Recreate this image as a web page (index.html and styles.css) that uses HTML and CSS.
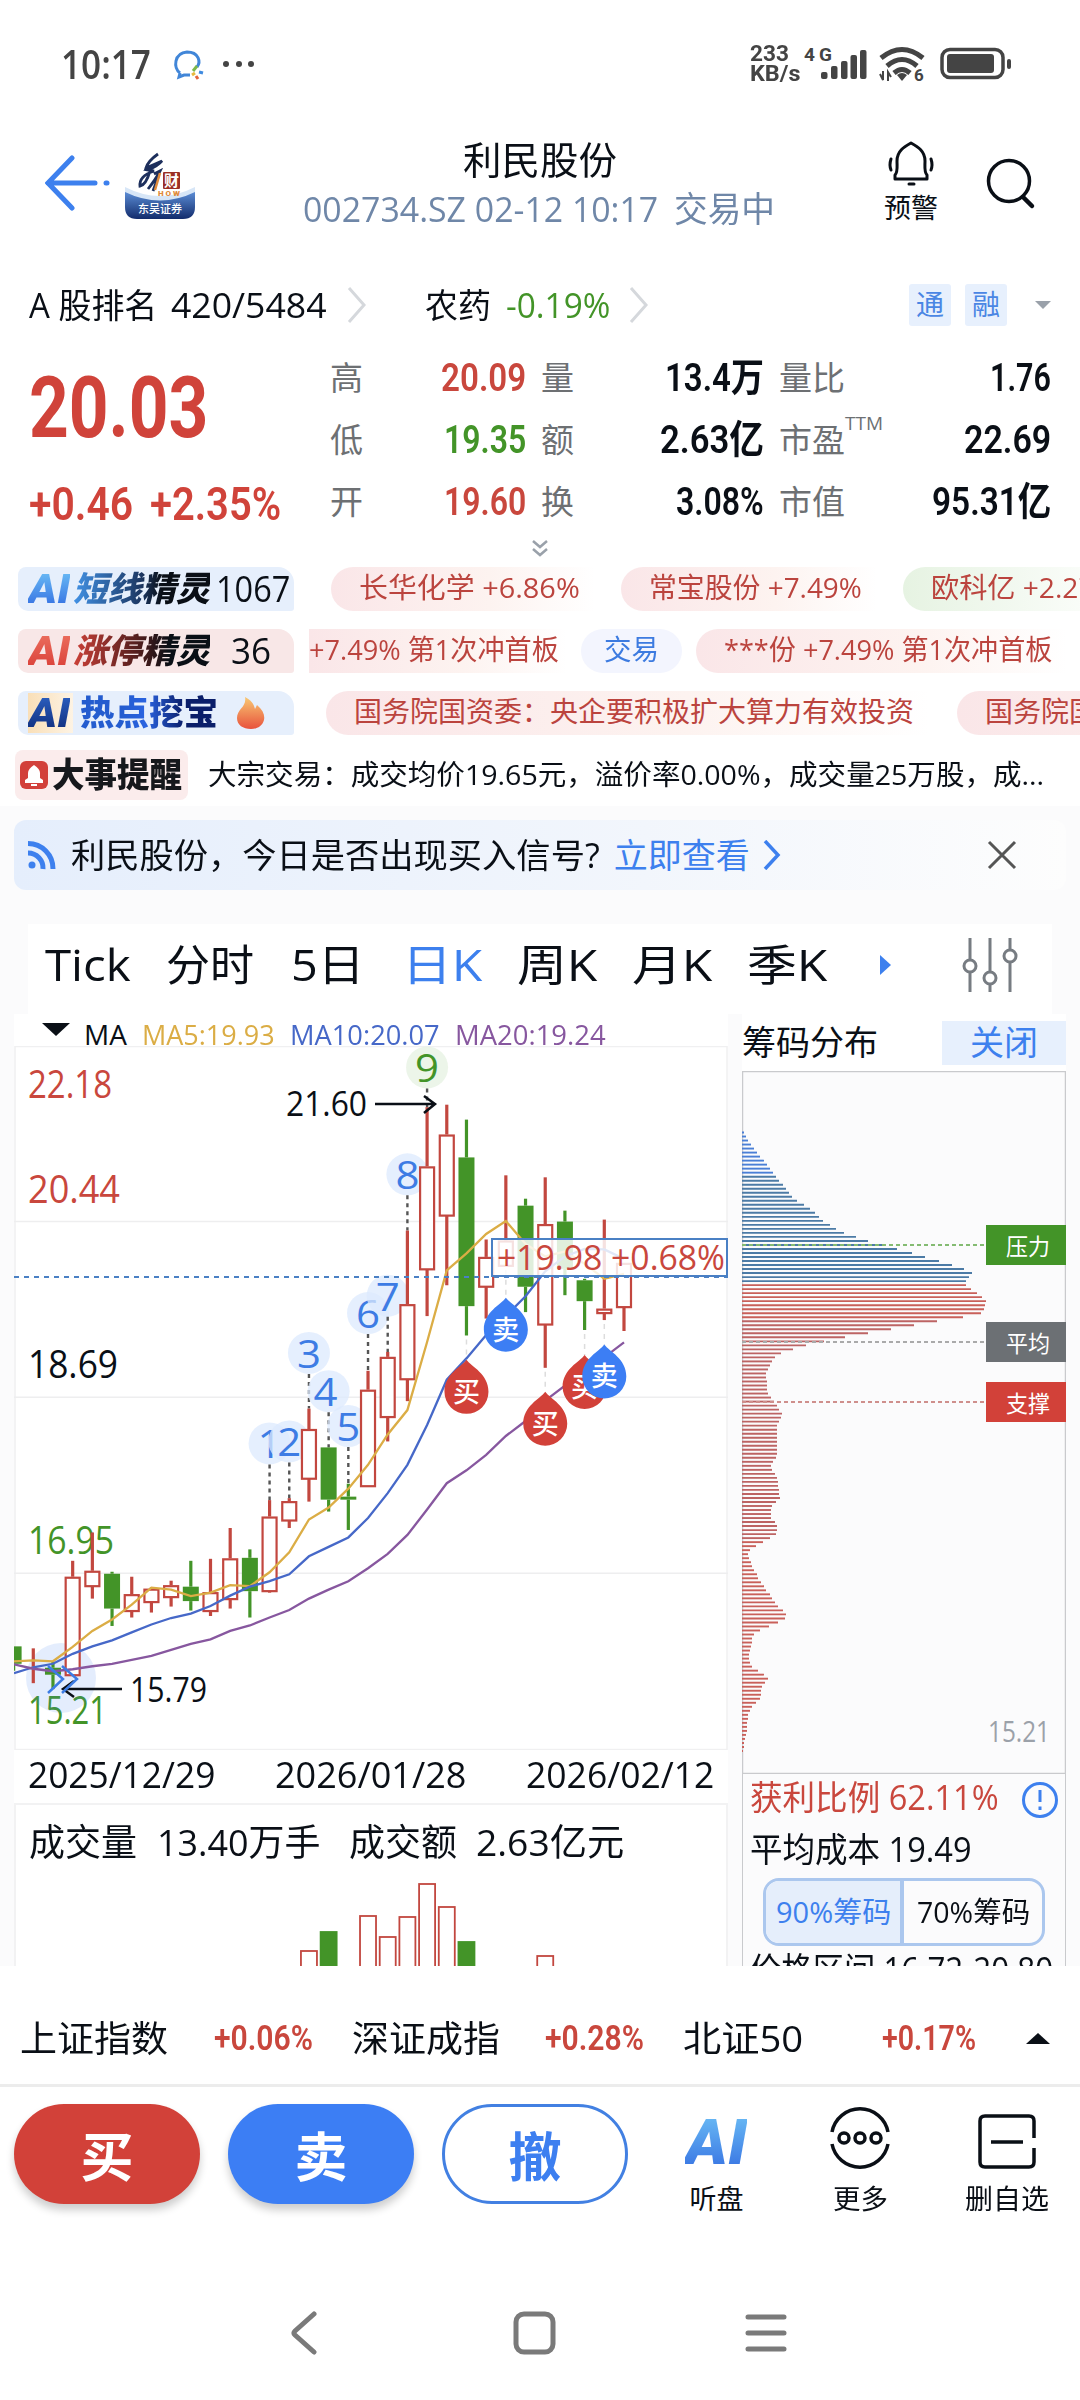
FILE: index.html
```html
<!DOCTYPE html>
<html lang="zh-CN">
<head>
    <meta charset="UTF-8">
    <meta name="viewport" content="width=device-width, initial-scale=1.0">
    <title>利民股份</title>
    <link rel="stylesheet" href="styles.css">
</head>
<body>
    <div class="status">
        <span class="time"><span class="fit" data-w="90">10:17</span></span>
        <svg class="chat" width="36" height="36" viewBox="0 0 36 36" fill="none">
            <path d="M10 27 C3 22 4 7 17 6 C29 6 31 16 27 21 M10 27 L9 31 L14 29 L20 29" stroke="#4186d8" stroke-width="3"/>
            <path d="M23 25 l4 -5" stroke="#7db84a" stroke-width="3"/><path d="M26 30 l2 3" stroke="#e4643c" stroke-width="3"/><path d="M29 26 l4 1" stroke="#3f8be0" stroke-width="3"/><path d="M22 29 l3 -2" stroke="#e8b93f" stroke-width="3"/>
        </svg>
        <svg class="dots" width="34" height="8" viewBox="0 0 34 8" fill="#444"><circle cx="4" cy="4" r="3"/><circle cx="17" cy="4" r="3"/><circle cx="29" cy="4" r="3"/></svg>
        <span class="speed"><span class="fit" data-w="39">233</span><br><span class="fit" data-w="51">KB/s</span></span>
        <svg width="216" height="40" viewBox="804 44 216 40" fill="#444">
            <text class="net" x="804" y="61" textLength="28">4G</text>
            <rect x="821" y="72" width="6.5" height="7" rx="2"/><rect x="831" y="66" width="6.5" height="13" rx="2"/><rect x="841" y="61" width="6.5" height="18" rx="2"/><rect x="850.500" y="55" width="6.500" height="24" rx="2"/><rect x="860" y="50" width="6.5" height="29" rx="2"/>
            <g fill="none" stroke="#444" stroke-width="5"><path d="M881 58 Q902 41 923 58"/><path d="M887 66 Q902 53 917 66"/><path d="M894 73 Q902 66 910 73"/></g>
            <path d="M897 75 Q902 71 907 75 L902 81 Z"/>
            <path d="M880 74 l3 6 v-9 M888 81 v-9 l3 5" fill="none" stroke="#444" stroke-width="2"/>
            <text class="net6" x="914" y="81">6</text>
            <rect x="942" y="49.500" width="61" height="28" rx="8" fill="none" stroke="#444" stroke-width="3.500"/><rect x="947" y="54" width="47" height="19" rx="3"/><rect x="1007" y="59" width="4" height="10" rx="2"/>
        </svg>
    </div>

    <div class="header">
        <svg class="back" width="68" height="60" viewBox="0 0 68 60" fill="none" stroke="#3d80ee" stroke-width="5" stroke-linecap="round"><path d="M27 5 L3 30 L27 55 M3 30 H50"/><path d="M61 30 h1"/></svg>
        <svg class="logo" width="72" height="72" viewBox="0 0 72 72">
            <defs><linearGradient id="lg" x1="0" y1="0" x2="0" y2="1"><stop offset="0" stop-color="#5d8fd8"/><stop offset="1" stop-color="#122c6c"/></linearGradient></defs>
            <path d="M1 42 Q36 58 71 42 V58 Q71 70 59 70 H13 Q1 70 1 58 Z" fill="url(#lg)"/>
            <path d="M1 38 Q36 56 71 38 V43 Q36 60 1 43 Z" fill="#d7e6f7"/>
            <path d="M34 5 Q24 12 22 19 L38 12 Q34 17 24 21 L30 22 Q15 27 16 37 Q22 36 26 22 M30 25 L36 22 Q32 30 24 40 M34 28 Q32 34 29 42" fill="none" stroke="#1d2f5c" stroke-width="2.800"/>
            <path d="M36 24 L31 41" stroke="#e08b3c" stroke-width="2.500"/>
            <rect x="39" y="23" width="17" height="17" rx="1" fill="#9b2f24"/>
            <text x="40" y="37" class="logo-red">财</text><text x="34" y="47" class="logo-how" textLength="22">HOW</text><text x="14" y="64" class="logo-name" textLength="44">东吴证券</text>
        </svg>
        <div class="titles">
            <h1><span class="fit" data-w="154">利民股份</span></h1>
            <div class="sub"><span class="fit" data-w="355">002734.SZ 02-12 10:17</span><span class="fit" data-w="101">交易中</span></div>
        </div>
        <div class="alert">
            <svg width="48" height="48" viewBox="0 0 48 48" fill="none" stroke="#0a0f16" stroke-width="3" stroke-linecap="round"><path d="M8 40 V36 C11 33 10 28 10 22 C10 12 17 8 24 4 C31 8 38 12 38 22 C38 28 37 33 40 36 V40 Z" stroke-linejoin="round"/><path d="M22 45 h5 M4 20 Q2 26 4 31 M44 20 Q46 26 44 31"/></svg>
            <span class="fit" data-w="54">预警</span>
        </div>
        <svg class="search" width="54" height="54" viewBox="0 0 54 54" fill="none" stroke="#0a0f16" stroke-width="3.500"><circle cx="25" cy="25" r="20.500"/><path d="M39 41 l9 9" stroke-width="4.500" stroke-linecap="round"/></svg>
    </div>

    <div class="rank">
        <span><span class="fit" data-w="128">A 股排名</span></span>
        <span><span class="fit" data-w="156">420/5484</span></span>
        <svg width="20" height="36" viewBox="0 0 20 36"><path d="M2 1 L17 18 L2 35" class="more"/></svg>
        <span><span class="fit" data-w="66">农药</span></span>
        <span class="green"><span class="fit" data-w="104">-0.19%</span></span>
        <svg width="20" height="36" viewBox="0 0 20 36"><path d="M2 1 L17 18 L2 35" class="more"/></svg>
        <span class="tag">通</span>
        <span class="tag">融</span>
        <svg width="18" height="10" viewBox="0 0 18 10"><path d="M1 1 H17 L9 9 Z" fill="#9aa1aa"/></svg>
    </div>

    <div class="quote">
        <div class="now">
            <div class="price"><span class="fit" data-w="179">20.03</span></div>
            <div class="change"><span class="fit" data-w="104">+0.46</span><span class="fit" data-w="131">+2.35%</span></div>
        </div>
        <div class="facts">
            <label>高</label><b class="red"><span class="fit" data-w="85">20.09</span></b><label>量</label><b><span class="fit" data-w="99">13.4万</span></b><label>量比</label><b><span class="fit" data-w="61">1.76</span></b>
            <label>低</label><b class="green"><span class="fit" data-w="82">19.35</span></b><label>额</label><b><span class="fit" data-w="104">2.63亿</span></b><label>市盈<sup>TTM</sup></label><b><span class="fit" data-w="87">22.69</span></b>
            <label>开</label><b class="red"><span class="fit" data-w="82">19.60</span></b><label>换</label><b><span class="fit" data-w="88">3.08%</span></b><label>市值</label><b><span class="fit" data-w="119">95.31亿</span></b>
        </div>
    </div>
    <div class="expand"><svg width="16" height="18" viewBox="0 0 16 18" fill="none" stroke="#9aa1aa" stroke-width="2.500"><path d="M1 2 L8 8 L15 2 M1 10 L8 16 L15 10"/></svg></div>

    <div class="feeds">
        <div class="feed">
            <div class="badge blue"><i class="ai"><span class="fit" data-w="42">AI</span></i><i class="name"><span class="fit" data-w="137">短线精灵</span></i><span class="count fit" data-w="74">1067</span></div>
            <div class="ticker t1"><span class="pill"><span class="fit" data-w="221">长华化学 +6.86%</span></span><span class="pill"><span class="fit" data-w="213">常宝股份 +7.49%</span></span><span class="pill lime"><span class="fit" data-w="187">欧科亿 +2.27%</span></span></div>
        </div>
        <div class="feed">
            <div class="badge pink"><i class="ai"><span class="fit" data-w="42">AI</span></i><i class="name"><span class="fit" data-w="137">涨停精灵</span></i><span class="count short fit" data-w="40">36</span></div>
            <div class="ticker t2"><span class="pill cut"><span class="fit" data-w="250">+7.49% 第1次冲首板</span></span><span class="pill deal"><span class="fit" data-w="55">交易</span></span><span class="pill"><span class="fit" data-w="328">***份 +7.49% 第1次冲首板</span></span><span class="pill deal"></span></div>
        </div>
        <div class="feed">
            <div class="badge hot"><i class="ai"><span class="fit" data-w="42">AI</span></i><i class="name"><span class="fit" data-w="138">热点挖宝</span></i>
                <svg width="32" height="34" viewBox="0 0 32 34"><defs><linearGradient id="fire" x1="0" y1="0" x2="0" y2="1"><stop offset="0" stop-color="#f8c873"/><stop offset="1" stop-color="#e8523c"/></linearGradient></defs><path d="M10 1 C16 4 19 8 20 13 L22 9 C28 14 30 19 29 24 C27 31 21 33 16 33 C8 33 2 29 2 22 C2 13 12 11 10 1 Z" fill="url(#fire)"/></svg>
            </div>
            <div class="ticker t3"><span class="pill wide"><span class="fit" data-w="560">国务院国资委：央企要积极扩大算力有效投资</span></span><span class="pill"><span class="fit" data-w="560">国务院国资委：央企要积极扩大算力有效投资</span></span></div>
        </div>
        <div class="feed event">
            <div class="badge remind">
                <svg width="30" height="30" viewBox="0 0 30 30"><rect x="1" y="1" width="28" height="28" rx="6" fill="#d2403a"/><path d="M6 23 V20 L9 18 V13 Q9 9 15 5 Q21 9 21 13 V18 L24 20 V23 Z M12 24 h6 v2 h-6 z" fill="#fff"/></svg>
                <i class="name"><span class="fit" data-w="130">大事提醒</span></i>
            </div>
            <span class="fit" data-w="836">大宗交易：成交均价19.65元，溢价率0.00%，成交量25万股，成...</span>
        </div>
    </div>

    <div class="main">
        <div class="banner">
            <svg width="30" height="30" viewBox="0 0 30 30" fill="none" stroke="#3d80ee" stroke-width="5"><circle cx="5" cy="25" r="3.500" fill="#3d80ee" stroke="none"/><path d="M1 13 A15 15 0 0 1 16 29 M1 3.500 A25 25 0 0 1 26 29"/></svg>
            <span class="fit" data-w="529">利民股份，今日是否出现买入信号?</span>
            <a><span class="fit" data-w="136">立即查看</span><svg width="18" height="30" viewBox="0 0 18 30"><path d="M2 1 L15 15 L2 29" fill="none" stroke="#3d80ee" stroke-width="3.500"/></svg></a>
            <svg class="close" width="30" height="30" viewBox="0 0 30 30"><path d="M2 2 L28 28 M28 2 L2 28" stroke="#555" stroke-width="3"/></svg>
        </div>

        <div class="tabs">
            <span><span class="fit" data-w="86">Tick</span></span>
            <span><span class="fit" data-w="88">分时</span></span>
            <span><span class="fit" data-w="74">5日</span></span>
            <span class="on"><span class="fit" data-w="80">日K</span></span>
            <span><span class="fit" data-w="80">周K</span></span>
            <span><span class="fit" data-w="80">月K</span></span>
            <span><span class="fit" data-w="80">季K</span></span>
            <svg width="12" height="22" viewBox="0 0 12 22"><path d="M1 1 L12 11 L1 21 Z" fill="#3d80ee"/></svg>
            <svg width="56" height="58" viewBox="0 0 56 58" fill="none" stroke="#777c82" stroke-width="3"><path d="M8 2 V24 M8 36 V56 M28 2 V36 M28 48 V56 M48 2 V14 M48 26 V56"/><circle cx="8" cy="30" r="6"/><circle cx="28" cy="42" r="6"/><circle cx="48" cy="20" r="6"/></svg>
        </div>

        <div class="panels">
            <div class="kline">
                <div class="legend">
                    <svg width="28" height="14" viewBox="0 0 28 14"><path d="M0 0 H28 L14 13 Z" fill="#0a0f16"/></svg>
                    <span><span class="fit" data-w="43">MA</span></span>
                    <span class="ma5"><span class="fit" data-w="133">MA5:19.93</span></span>
                    <span class="ma10"><span class="fit" data-w="150">MA10:20.07</span></span>
                    <span class="ma20"><span class="fit" data-w="151">MA20:19.24</span></span>
                </div>
                <svg id="candles" width="714" height="704" viewBox="0 0 714 704"></svg>
                <div class="dates"><span class="fit" data-w="187">2025/12/29</span><span class="fit" data-w="191">2026/01/28</span><span class="fit" data-w="188">2026/02/12</span></div>
                <div class="volume">
                    <div class="vtext"><span><span class="fit" data-w="108">成交量</span></span><span><span class="fit" data-w="163">13.40万手</span></span><span><span class="fit" data-w="108">成交额</span></span><span><span class="fit" data-w="148">2.63亿元</span></span></div>
                    <svg id="bars" width="712" height="86" viewBox="0 0 712 86"></svg>
                </div>
            </div>

            <div class="chips">
                <div class="chead"><span class="fit" data-w="136">筹码分布</span><a><span class="fit" data-w="68">关闭</span></a></div>
                <svg id="chips" width="324" height="703" viewBox="0 0 324 703"></svg>
                <div class="cinfo">
                    <div class="line red"><span class="fit" data-w="249">获利比例 62.11%</span>
                        <svg width="38" height="38" viewBox="0 0 38 38" fill="none" stroke="#3d80ee" stroke-width="3"><circle cx="19" cy="19" r="16.500"/><path d="M19 9 V21 M19 25.500 V29"/></svg>
                    </div>
                    <div class="line"><span class="fit" data-w="222">平均成本 19.49</span></div>
                    <div class="switch"><span class="on"><span class="fit" data-w="115">90%筹码</span></span><span><span class="fit" data-w="113">70%筹码</span></span></div>
                    <div class="line last"><span class="fit" data-w="303">价格区间 16.72-20.80</span></div>
                </div>
            </div>
        </div>
    </div>

    <div class="indexes">
        <span><span class="fit" data-w="148">上证指数</span></span><b><span class="fit" data-w="99">+0.06%</span></b>
        <span><span class="fit" data-w="148">深证成指</span></span><b><span class="fit" data-w="99">+0.28%</span></b>
        <span><span class="fit" data-w="120">北证50</span></span><b><span class="fit" data-w="94">+0.17%</span></b>
        <svg width="24" height="12" viewBox="0 0 24 12"><path d="M0 11 L12 0 L24 11 Z" fill="#0a0f16"/></svg>
    </div>

    <div class="actions">
        <button class="buy">买</button>
        <button class="sell">卖</button>
        <button class="cancel">撤</button>
        <div class="tool"><i class="ai big"><span class="fit" data-w="62">AI</span></i><span class="fit" data-w="54">听盘</span></div>
        <div class="tool">
            <svg width="62" height="62" viewBox="0 0 62 62" fill="none" stroke="#0a0f16" stroke-width="3.500"><path d="M3 25 A28.500 28.500 0 0 1 59 25 M3 37 A28.500 28.500 0 0 0 59 37"/><circle cx="15" cy="31" r="5"/><circle cx="31" cy="31" r="5"/><circle cx="47" cy="31" r="5"/></svg>
            <span class="fit" data-w="55">更多</span>
        </div>
        <div class="tool">
            <svg width="58" height="62" viewBox="0 0 58 62" fill="none" stroke="#0a0f16" stroke-width="3.500"><path d="M56 31 V14 Q56 9 51 9 H7 Q2 9 2 14 V55 Q2 60 7 60 H51 Q56 60 56 55 V41 M13 35 H45"/></svg>
            <span class="fit" data-w="84">删自选</span>
        </div>
    </div>

    <div class="nav">
        <svg width="28" height="44" viewBox="0 0 28 44"><path d="M25 3 L6 20 Q4 22 6 24 L25 41"/></svg>
        <svg width="44" height="44" viewBox="0 0 44 44"><rect x="4" y="3" width="37" height="38" rx="8"/></svg>
        <svg width="42" height="44" viewBox="0 0 42 44"><path d="M3 6 H39 M3 22 H39 M3 38 H39"/></svg>
    </div>
    <script src="chart.js"></script>
</body>
</html>
```
FILE: styles.css
```css
*{
    margin: 0; padding: 0;
    box-sizing: border-box;
}
body{
    width: 1080px;
    height: 2400px;
    overflow: hidden;
    display: flex;
    flex-direction: column;
    background: #fff;
    color: #0a0f16;
    font-family: "Open Sans", "Noto Sans CJK SC", sans-serif;
    font-size: 32px;
    line-height: 1.2;
    white-space: nowrap;
}
body > div{
    flex-shrink: 0;
}
svg{
    display: block;
    flex-shrink: 0;
}
/* text set to a fixed width, see chart.js */
.fit{
    display: inline-block;
    transform-origin: 0 50%;
}
.red{ color: #c9473d; }
.green{ color: #439428; }

.status{
    height: 128px;
    display: flex;
    align-items: center;
    padding-left: 61px;
    color: #444;
}
.time{
    width: 109px;
    font-size: 39px;
    font-weight: 600;
}
.dots{ margin-left: 16px; }
.speed{
    margin-left: auto;
    width: 54px;
    font: 700 22px/20px Roboto, sans-serif;
}
.status .dots + .speed + svg{ margin-right: 60px; }
.net{ font: 700 19px Roboto, sans-serif; }
.net6{ font: 700 17px Roboto, sans-serif; }

.header{
    height: 134px;
    display: grid;
    grid-template-columns: 79px 177px 563px 97px 60px;
    padding-left: 45px;
}
.back{ margin-top: 25px; }
.logo{ margin-top: 21px; }
.logo-red{ font: 700 15px "Noto Sans CJK SC", sans-serif; fill: #fff; }
.logo-how{ font: 900 8px Roboto, sans-serif; fill: #e08b3c; }
.logo-name{ font: 500 11px "Noto Sans CJK SC", sans-serif; fill: #fff; }
.titles{
    padding-top: 6px;
}
h1{
    padding-left: 162px;
    font-size: 38px;
    font-weight: 400;
    line-height: 50px;
}
.sub{
    display: flex;
    gap: 16px;
    padding-left: 2px;
    font-size: 35px;
    line-height: 49px;
    color: #6f87a8;
}
.alert{
    padding-top: 11px;
    display: flex;
    flex-direction: column;
    align-items: center;
    width: 60px;
    margin-left: 17px;
    font-size: 27px;
    line-height: 42px;
}
.search{ margin: 28px 0 0 23px; }

.rank{
    height: 84px;
    padding-top: 2px;
    display: grid;
    grid-template-columns: 142px 176px 78px 81px 123px 280px 56px 69px 20px;
    align-items: center;
    padding-left: 29px;
    font-size: 34px;
}
.more{
    fill: none;
    stroke: #d5d8dc;
    stroke-width: 3;
}
.tag{
    width: 42px;
    height: 42px;
    border-radius: 3px;
    background: #e7f0fd;
    color: #4a86e4;
    font-size: 28px;
    line-height: 41px;
    text-align: center;
}

.quote{
    height: 186px;
    padding-top: 1px;
    display: flex;
}
.now{
    width: 330px;
    padding: 16px 0 0 29px;
    color: #d0433a;
    font-family: Roboto, sans-serif;
    font-weight: 600;
}
.price{
    font-size: 86px;
    line-height: 90px;
    height: 114px;
    font-weight: 700;
}
.change{
    display: flex;
    gap: 17px;
    font-size: 46px;
    line-height: 54px;
    font-weight: 600;
}
.facts{
    display: grid;
    grid-template-columns: 80px 116px 35px 203px 130px 157px;
    grid-template-rows: 62px 62px 62px;
    align-items: center;
}
.facts label{
    color: #6d7073;
    font-size: 33px;
}
.facts b{
    text-align: right;
    font: 600 39px/46px Roboto, "Noto Sans CJK SC", sans-serif;
}
.facts > :nth-child(6n+3),
.facts > :nth-child(6n+5){ padding-left: 15px; }
.facts sup{
    font-size: 19px;
    line-height: 0;
    vertical-align: 22px;
}
.expand{
    height: 32px;
    display: flex;
    align-items: center;
    justify-content: center;
}

.feeds{
    height: 242px;
    padding-top: 3px;
    display: flex;
    flex-direction: column;
    gap: 18px;
}
.feed{
    height: 44px;
    display: flex;
    align-items: center;
    font-size: 28px;
}
.badge{
    width: 276px;
    height: 44px;
    margin-left: 18px;
    padding-left: 10px;
    display: flex;
    align-items: center;
    border-radius: 8px 16px 3px 10px;
}
.blue, .hot{ background: #e6effc; }
.pink{ background: #f8e7e7; }
.badge i{
    font-family: Roboto, "Noto Sans CJK SC", sans-serif;
    font-weight: 900;
    font-style: italic;
    line-height: 44px;
}
.badge .ai{
    width: 45px;
    font-size: 41px;
}
.badge .name{
    font-size: 34px;
}
.hot .name, .remind .name{ font-style: normal; }
.ai .fit, .name .fit{
    -webkit-background-clip: text;
    background-clip: text;
    color: transparent;
}
.ai .fit{ background-image: linear-gradient(#70c4f7, #3069e0); }
.blue .name .fit{ background-image: linear-gradient(90deg, #4292e6, #1c3762 50%, #0a0f16 65%); }
.pink .ai .fit{ background-image: linear-gradient(#ed7462, #d83b35); }
.pink .name .fit{ background-image: linear-gradient(90deg, #cc4138, #4b1c1c 50%, #0a0f16 70%); }
.hot .ai .fit{ background-image: linear-gradient(#2e62c4, #0e2c7a); }
.hot .name .fit{ background-image: linear-gradient(90deg, #245ccf 30%, #2a63e0 48%, #0a1e6a 75%); }
.hot .name{ margin-left: 7px; }
.hot .ai{ background: linear-gradient(90deg, #f9dfb8, #fdf3e4); height: 40px; line-height: 40px; }
.hot svg{ margin-left: 17px; }
.count{
    margin-left: 6px;
    font-size: 36px;
}
.count.short{ margin-left: 21px; }
.ticker{
    width: 771px;
    height: 44px;
    margin-left: 15px;
    display: flex;
    overflow: hidden;
    color: #bb443e;
}
.pill{
    flex-shrink: 0;
    height: 44px;
    padding: 0 15px 0 28px;
    border-radius: 22px 0 0 22px;
    background: linear-gradient(90deg, #fae6e8, #fdf3f0 60%, #fff);
    font-size: 28px;
    line-height: 41px;
}
.t1{ padding-left: 22px; gap: 26px; }
.t2{ gap: 14px; }
.t3{ padding-left: 17px; gap: 28px; }
.lime{ background: linear-gradient(90deg, #e6f3e2, #fff); }
.deal{
    padding: 0 23px;
    border-radius: 22px;
    background: #f3f5fe;
    color: #3d7be0;
}
.cut{
    padding: 0 8px 0 0;
    border-radius: 0;
}
.event{ height: 50px; margin-top: -3px; }
.remind{
    width: 173px;
    height: 50px;
    margin: 0 20px 0 15px;
    padding-left: 4px;
    background: #fbecec;
    border-radius: 8px;
}
.remind .name{ margin-left: 3px; }
.remind .name .fit{ background: none; color: #16181c; }

.main{
    height: 1160px;
    padding: 14px 14px 0;
    background: #fbfbfc;
    overflow: hidden;
}
.banner{
    height: 70px;
    padding-left: 13px;
    display: flex;
    align-items: center;
    border-radius: 12px;
    background: linear-gradient(90deg, #e5eefc, #f2f6fc 60%, #fdfdfd);
    font-size: 34px;
}
.banner > .fit{ margin-left: 14px; }
.banner a{
    display: flex;
    align-items: center;
    gap: 13px;
    margin-left: 14px;
    color: #3d80ee;
}
.close{ margin-left: auto; margin-right: 49px; }

.tabs{
    width: 1024px;
    height: 90px;
    margin: 34px 0 0 14px;
    padding: 0 0 9px 17px;
    display: grid;
    grid-template-columns: 121px 125px 111px 115px 115px 115px 132px 83px 56px;
    align-items: center;
    background: #fff;
    font-size: 43px;
}
.tabs .on{ color: #3d80ee; }

.panels{
    display: flex;
    gap: 14px;
}
.kline{
    width: 714px;
    height: 952px;
    background: #fff;
}
.legend{
    height: 32px;
    padding: 8px 0 0 28px;
    display: grid;
    grid-template-columns: 42px 58px 148px 165px 160px;
    align-items: center;
    font-size: 28px;
    line-height: 24px;
}
.legend svg{ margin-top: -9px; }
.ma5{ color: #dbad45; }
.ma10{ color: #4668c8; }
.ma20{ color: #87579f; }
.dates{
    height: 53px;
    padding: 0 14px 6px;
    display: flex;
    justify-content: space-between;
    align-items: center;
    font-size: 37px;
    line-height: 40px;
}
.volume{
    height: 163px;
    border: 2px solid #f2f2f3;
    border-bottom: 0;
}
.vtext{
    height: 75px;
    padding-left: 13px;
    display: grid;
    grid-template-columns: 128px 192px 127px 160px;
    align-items: center;
    font-size: 37px;
}
.chips{ width: 324px; }
.chead{
    height: 57px;
    background: #fff;
    display: flex;
    justify-content: space-between;
    align-items: center;
    font-size: 34px;
}
.chead a{
    width: 124px;
    height: 44px;
    padding-left: 28px;
    background: #e7f0fd;
    color: #3d80ee;
    line-height: 42px;
}
.cinfo{
    height: 192px;
    padding-left: 7px;
    border: 1px solid #c9cacd;
    border-width: 0 1px;
    overflow: hidden;
}
.line{
    height: 52px;
    display: flex;
    align-items: center;
    justify-content: space-between;
    padding-right: 6px;
    font-size: 34px;
    line-height: 48px;
}
.line > .fit{
    position: relative;
    top: -3px;
}
.switch{
    width: 282px;
    height: 68px;
    margin-left: 13px;
    display: flex;
    border: 3px solid #abc7ee;
    border-radius: 16px;
    font-size: 29px;
    line-height: 61px;
    overflow: hidden;
}
.switch > span{
    width: 50%;
    padding-left: 13px;
}
.switch > .on{
    padding-left: 10px;
    background: #e5eefb;
    border-right: 4px solid #abc7ee;
    color: #3d80ee;
}

.indexes{
    height: 121px;
    padding: 28px 0 0 20px;
    border-bottom: 3px solid #ececec;
    display: grid;
    grid-template-columns: 194px 138px 193px 138px 199px 144px 24px;
    align-items: center;
    font-size: 36px;
}
.indexes b{
    font: 600 35px/40px Roboto, sans-serif;
    color: #c9473d;
}
.actions{
    height: 173px;
    padding: 17px 0 0 14px;
    display: grid;
    grid-template-columns: 214px 214px 213px 123px 164px 130px;
}
button{
    width: 186px;
    height: 100px;
    border: 0;
    border-radius: 50px;
    color: #fff;
    font: 700 53px/96px "Noto Sans CJK SC", sans-serif;
    box-shadow: 0 6px 9px rgba(0, 0, 0, .2);
}
.buy{ background: #d24139; }
.sell{ background: #3c7ef4; }
.cancel{
    background: #fff;
    border: 3px solid #4280e2;
    color: #3d7ff0;
    line-height: 92px;
    box-shadow: none;
}
.tool{
    padding-top: 3px;
    display: flex;
    flex-direction: column;
    align-items: center;
    font-size: 27px;
    line-height: 60px;
}
.tool .big{
    height: 62px;
    font: italic 900 62px/72px Roboto, sans-serif;
}
.nav{
    height: 140px;
    display: flex;
    align-items: center;
    padding: 6px 0 0 289px;
    gap: 195px;
    fill: none;
    stroke: #7a7a7a;
    stroke-width: 5;
    stroke-linecap: round;
}
.nav svg:last-child{ margin-left: -6px; }

#candles text, #chips text{ fill: #0a0f16; font-size: 38px; }
#candles text.c-red{ fill: #c9473d; }
#candles text.c-green{ fill: #439428; }
#candles text.c-blue{ fill: #3d7ce4; }
#candles text.small{ font-size: 34px; }
#candles text.drop{
    fill: #fff;
    font: 500 27px "Noto Sans CJK SC", sans-serif;
}
#chips text.low{ fill: #9ba1a9; font-size: 30px; }
#chips text.flag{ fill: #fff; font: 400 23px "Noto Sans CJK SC", sans-serif; }
```
FILE: chart.js
```js
// squeeze or stretch every .fit text to its data-w
document.querySelectorAll(".fit").forEach(function(el){
    let natural = el.offsetWidth;
    let w = Number(el.dataset.w);
    el.style.transform = "scaleX(" + (w / natural) + ")";
    el.style.marginRight = (w - natural) + "px";
});

const RED = "#c2473f", GREEN = "#439428", BLUE = "#3d7ce4";
let x = i => 19.69 * i - 0.4;
let y = v => (v - 72) * 0.4974;

// high, body top, body bottom, low, 1 = up
let data = [
    [1279,1279,1314,1328,0],[1283,1320,1324,1353,1],[1310,1322,1336,1365,0],[1107,1139,1337,1337,1],
    [1050,1127,1158,1183,1],[1129,1133,1203,1238,0],[1139,1174,1208,1221,1],[1160,1163,1190,1211,1],
    [1147,1156,1180,1199,1],[1107,1159,1188,1207,0],[1103,1170,1208,1218,1],[1041,1102,1184,1203,1],
    [1084,1101,1168,1221,0],[985,1018,1168,1171,1],[981,987,1026,1041,1],[801,842,942,988,1],
    [879,879,984,1008,0],[952,978,984,1045,0],[725,763,957,957,1],[687,697,818,867,1],
    [443,591,742,786,1],[195,314,521,615,1],[190,250,413,553,1],[220,296,595,654,0],
    [461,496,556,620,1],[332,463,514,514,1],[379,393,556,607,0],[336,430,632,719,1],
    [403,425,520,573,0],[540,543,585,643,0],[421,600,609,623,1],[508,508,597,645,1]
];
let ma5 = [1309,1307,1309,1280,1248,1225,1195,1161,1165,1178,1171,1156,1158,1130,1090,1024,1000,962,914,853,804,667,523,489,450,424,470,495,485,510,540,530];
let ma10 = [1333,1321,1314,1294,1279,1267,1251,1235,1222,1213,1198,1177,1159,1148,1134,1098,1079,1060,1021,971,914,834,743,700,653,615,575,525,495,480,481,500];
let ma20 = [1315,1324,1329,1325,1319,1314,1306,1298,1286,1274,1265,1248,1237,1221,1206,1183,1165,1148,1122,1093,1055,1004,951,925,894,856,826,785,755,715,698,668];

function line(x1, y1, x2, y2, color, w, dash){
    return `<path d="M${x1} ${y1} L${x2} ${y2}" stroke="${color}" stroke-width="${w}" ${dash ? `stroke-dasharray="${dash}"` : ""}/>`;
}
function text(tx, ty, w, s, cls){
    return `<text x="${tx}" y="${ty}" textLength="${w}" lengthAdjust="spacingAndGlyphs" class="${cls}">${s}</text>`;
}
function curve(points, color){
    let p = points.map((v, i) => (i ? x(i) : 0) + "," + y(v)).join(" ");
    return `<polyline points="${p}" fill="none" stroke="${color}" stroke-width="2.3"/>`;
}

let out = `<rect x="1" y="0.5" width="712" height="703" fill="none" stroke="#f0f0f1" stroke-width="1.5"/>`;
[425, 778, 1132].forEach(v => out += line(0, y(v), 714, y(v), "#eeeeef", 1.5));
out += text(14, 52, 84, "22.18", "c-red");
out += text(14, 157, 92, "20.44", "c-red");
out += text(14, 332, 90, "18.69", "");
out += text(14, 508, 86, "16.95", "c-green");
out += text(14, 678, 79, "15.21", "c-green");
out += `<circle cx="47" cy="632" r="35" fill="#3d80ee" opacity=".14"/>`;

// count marks over the rally
[[13,871,1],[14,867,2],[15,689,3],[16,766,4],[17,836,5],[18,609,6],[19,574,7],[20,330,8],[21,115,9]].forEach(function(m){
    let last = m[2] == 9;
    out += `<circle cx="${x(m[0])}" cy="${y(m[1])}" r="21" fill="${last ? "#e5f1e1" : "#dceafd"}" opacity=".75"/>`;
    out += line(x(m[0]), y(m[1]) + 21, x(m[0]), y(data[m[0]][0]), "#555", 2.4, "4 4");
    let dx = m[2] == 4 ? 3 : 0;
    out += text(x(m[0]) - 12 - dx, y(m[1]) + 15, 24, m[2], last ? "c-green" : "c-blue");
});
data.forEach(function(d, i){
    let c = d[4] ? RED : GREEN, cx = x(i);
    out += line(cx, y(d[0]), cx, y(d[1]), c, 3.2) + line(cx, y(d[2]), cx, y(d[3]), c, 3.2);
    let h = Math.max(y(d[2]) - y(d[1]), 3);
    if(i == 1) out += line(cx, y(d[1]), cx, y(d[2]), c, 3.2);
    else if(d[4]) out += `<rect x="${cx - 7}" y="${y(d[1]) + 1}" width="14" height="${h - 1}" fill="#fff" stroke="${c}" stroke-width="2.2"/>`;
    else out += `<rect x="${cx - 8}" y="${y(d[1])}" width="16" height="${h}" fill="${c}"/>`;
});
out += curve(ma5, "#dbad45") + curve(ma10, "#4668c8") + curve(ma20, "#87579f");
out += line(0, 231, 714, 231, "#4a80c4", 2, "5 5");

// buy and sell points
[[23,703,"买"],[25,578,"卖"],[27,767,"买"],[29,693,"买"],[30,672,"卖"]].forEach(function(m){
    let c = m[2] == "买" ? "#d24139" : "#3c7ef4";
    out += line(x(m[0]), y(data[m[0]][3]) + 4, x(m[0]), y(m[1]), "#ddd", 1.5, "5 5");
    out += `<g transform="translate(${x(m[0])} ${y(m[1])})"><path d="M0 0 C5 7 22 14 22 32 A22 22 0 0 1 -22 32 C-22 14 -5 7 0 0 Z" fill="${c}"/><text x="0" y="42" text-anchor="middle" class="drop">${m[2]}</text></g>`;
});
out += `<g fill="none" stroke="#0a0f16" stroke-width="2.5"><path d="M361 58 H420 M410 50 L421 58 L410 67"/><path d="M108 643 H50 M60 635 L49 643 L60 651"/></g>`;
out += `<path d="M34 620 L49 633 L34 647 M48 620 L63 633 L48 647" fill="none" stroke="${BLUE}" stroke-width="2.5"/>`;
out += text(272, 70, 81, "21.60", "small") + text(116, 656, 77, "15.79", "small");
out += `<rect x="478" y="193" width="235" height="37" fill="#fff" fill-opacity=".84" stroke="#4a80c4" stroke-width="2"/>`;
out += text(483, 224, 228, "+19.98 +0.68%", "small c-red");
document.querySelector("#candles").innerHTML = out;

// volume
out = "";
[[15,67],[16,48],[18,32],[19,53],[20,33],[21,0],[22,23],[23,58],[27,72]].forEach(function(b){
    let up = b[0] != 16 && b[0] != 23;
    out += `<rect x="${x(b[0]) - 10}" y="${b[1] + 4}" width="16" height="120" fill="${up ? "#fff" : GREEN}" stroke="${up ? RED : GREEN}" stroke-width="1.8"/>`;
});
document.querySelector("#bars").innerHTML = out;

// chip distribution, blue above the price and red below it
let blue = [42,48,54,63,72,81,90,102,111,120,129,138,147,159,168,177,186,201,222,240,255,267,279,300,318,342,378,414,456,501,546,585,627,666,702,726,717,708];
let red = [708,723,741,756,768,765,762,753,699,621,552,483,414,345,282,228,189,153,135,126,120,114,108,108,111,111,111,114,123,132,141,147,156,153,147,141,141,141,141,141,141,141,141,138,129,123,126,135,141,144,144,147,147,150,138,126,123,123,123,135,141,141,138,120,99,78,60,54,57,63,66,72,81,84,93,102,108,120,126,135,144,159,168,165,144,117,90,72,66,66,63,60,57,57,60,66,84,102,114,105,96,93,93,90,78,66,60,54,54,51,51,51,48,45,42,42,39];
out = `<rect x="0.5" y="0.5" width="323" height="702" fill="#fbfbfc" stroke="#c9cacd" stroke-width="1.5"/>`;
blue.concat(red).forEach(function(v, i){
    let c = i < 11 ? "#4a7fd6" : i < 38 ? "#4c7ba6" : i < 47 || i > 101 ? "#c9605a" : "#bd6464";
    let cy = 61.5 + i * 4.016;
    out += line(0, cy, (v - 36) / 3, cy, c, 1.9);
});
[[174,"#84bb72","#439428","压力"],[271,"#aaa","#6c7074","平均"],[331,"#cf8f8c","#d24139","支撑"]].forEach(function(f){
    out += line(0, f[0], 244, f[0], f[1], 1.8, "4 3");
    out += `<rect x="244" y="${f[0] - 20}" width="80" height="40" fill="${f[2]}"/>` + text(264, f[0] + 10, 44, f[3], "flag");
});
out += text(246, 671, 62, "15.21", "low");
document.querySelector("#chips").innerHTML = out;
```
